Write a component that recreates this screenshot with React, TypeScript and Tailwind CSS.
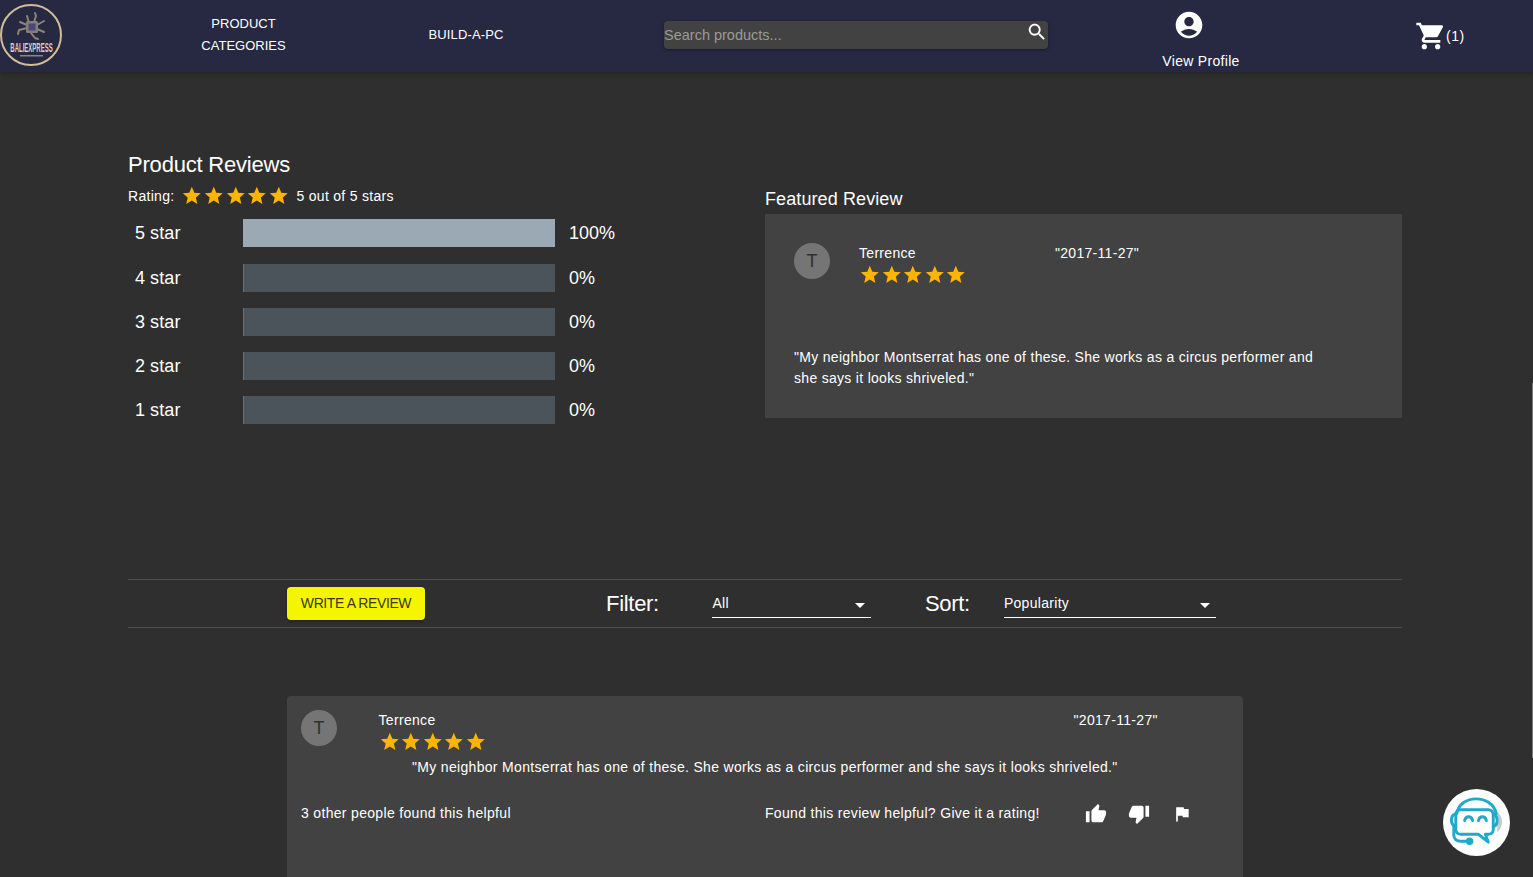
const STAR = "M12 17.27 18.18 21l-1.64-7.03L22 9.24l-7.19-.61L12 2 9.19 8.63 2 9.24l5.46 4.73L5.82 21z";

function Icon({ d, className }: { d: string; className: string }) {
  return (
    <svg viewBox="0 0 24 24" fill="currentColor" className={className}>
      <path d={d} />
    </svg>
  );
}

function Stars() {
  return (
    <div className="flex text-[#ffb400]">
      {[0, 1, 2, 3, 4].map((i) => (
        <Icon key={i} d={STAR} className="w-[21.6px] h-[21.6px]" />
      ))}
    </div>
  );
}

function Avatar() {
  return (
    <div className="w-9 h-9 rounded-full bg-[#757575] text-[#303030] flex items-center justify-center text-[18px] tracking-normal shrink-0">T</div>
  );
}

function Logo() {
  return (
    <svg viewBox="0 0 64 66" className="w-16 h-[66px] shrink-0">
      <circle cx="31" cy="32" r="30" fill="#272942" stroke="#d3bd96" strokeWidth="2" />
      <g stroke="#8d8474" strokeWidth="2" fill="none" strokeLinecap="round" strokeLinejoin="round">
        <path d="M29 20 L27 13 M34 19 L36 13 L35 10 M27 22 L20 19 M27 25 L19 27 L18 31 M37 22 L44 18 M37 26 L44 29 M31 30 L35 35 L38 36" />
      </g>
      <rect x="26" y="18" width="12" height="12" rx="1.5" fill="#857d78" />
      <rect x="28.5" y="20.5" width="7" height="7" fill="#4a467e" />
      <text x="0" y="0" transform="translate(31.5 49) scale(0.5 1)" textAnchor="middle" fontSize="12" fontWeight="700" fill="#d8d3c6" fontFamily="'Liberation Sans', sans-serif">BALIEXPRESS</text>
      <rect x="20" y="52" width="23" height="1.5" fill="#8b8880" />
    </svg>
  );
}

function Bot() {
  return (
    <svg viewBox="0 0 68 68" className="w-[67px] h-[67px]">
      <circle cx="34" cy="34" r="34" fill="#fff" />
      <path d="M55 23 C61 27 62 38 55 44 Z" fill="#c9c9c9" />
      <g fill="none" stroke="#1fa9cb" strokeWidth="3" strokeLinecap="round" strokeLinejoin="round">
        <path d="M14 25 C17 5 50 5 54 25" />
        <path d="M18 21 H46 C49 21 51 23 51 26 V41 C51 44 49 46 46 46 H43 L46 54 L36 46 H18 C15 46 13 44 13 41 V26 C13 23 15 21 18 21 Z" />
        <path d="M13 25 C7 27 7 36 13 38" />
        <path d="M51 25 C56 27 56 36 52 38" />
        <path d="M11 38 V47 C11 51 14 53 18 53 H26" />
        <path d="M22 32 C23 27 29 27 30 32" />
        <path d="M36 32 C37 27 43 27 44 32" />
      </g>
      <circle cx="27" cy="53" r="3.8" fill="#1fa9cb" />
    </svg>
  );
}

function RatingRow({ label, pct, filled, className }: { label: string; pct: string; filled?: boolean; className: string }) {
  return (
    <div className={`flex items-center h-7 ${className}`}>
      <div className="w-[53px] text-right text-[18px] tracking-[0.1px] shrink-0">{label}</div>
      <div className={`ml-[62px] w-[312px] h-7 shrink-0 ${filled ? "bg-[#9aa9b3]" : "bg-[#4b545a] border-l border-[#6a7278]"}`} />
      <div className="ml-[14.5px] text-[18px]">{pct}</div>
    </div>
  );
}

function Select({ value, className }: { value: string; className: string }) {
  return (
    <div className={`relative h-[29px] border-b border-white flex items-center text-[14px] tracking-[0.3px] shrink-0 ${className}`}>
      {value}
      <svg viewBox="0 0 24 24" fill="currentColor" className="absolute -right-[1px] top-1 w-6 h-6 text-white">
        <path d="M7 10l5 5 5-5z" />
      </svg>
    </div>
  );
}

export default function App() {
  return (
    <div className="relative h-[877px] overflow-hidden bg-[#2f2f2f] text-white font-['Liberation_Sans',Arial,sans-serif]">
      <header className="h-[72px] bg-[#272942] flex items-center shadow-[0_2px_4px_rgba(0,0,0,0.25)] text-[14px]">
        <Logo />
        <div className="ml-[136px] w-[87px] text-center text-[13px] leading-[22px] -mt-[2px] shrink-0">PRODUCT CATEGORIES</div>
        <div className="ml-[141px] w-[76px] text-center text-[13px] tracking-[0.15px] -mt-[2px] shrink-0 whitespace-nowrap">BUILD-A-PC</div>
        <div className="ml-[160px] w-[384px] h-7 rounded bg-[#424242] shadow-[0_1px_3px_rgba(0,0,0,0.4)] flex items-center justify-between -mt-[2px] shrink-0">
          <span className="text-[#9a9a9a] text-[14.5px] pt-[1px]">Search products...</span>
          <Icon d="M15.5 14h-.79l-.28-.27C15.41 12.59 16 11.11 16 9.5 16 5.91 13.09 3 9.5 3S3 5.91 3 9.5 5.91 16 9.5 16c1.61 0 3.09-.59 4.23-1.57l.27.28v.79l5 4.99L20.49 19l-4.99-5zm-6 0C7.01 14 5 11.99 5 9.5S7.01 5 9.5 5 14 7.01 14 9.5 11.99 14 9.5 14z" className="w-[22px] h-[22px] -mt-[6px]" />
        </div>
        <div className="ml-[114px] w-[78px] h-full shrink-0 flex flex-col">
          <Icon d="M12 2C6.48 2 2 6.48 2 12s4.48 10 10 10 10-4.48 10-10S17.52 2 12 2zm0 4c1.93 0 3.5 1.57 3.5 3.5S13.93 13 12 13s-3.5-1.57-3.5-3.5S10.07 6 12 6zm0 14c-2.03 0-4.43-.82-6.14-2.88C7.55 15.8 9.68 15 12 15s4.45.8 6.14 2.12C16.43 19.18 14.03 20 12 20z" className="w-8 h-8 mt-[9px] ml-[11px]" />
          <div className="mt-[10px] whitespace-nowrap text-center tracking-[0.3px]">View Profile</div>
        </div>
        <div className="ml-[175px] flex items-center shrink-0">
          <Icon d="M7 18c-1.1 0-1.99.9-1.99 2S5.9 22 7 22s2-.9 2-2-.9-2-2-2zM1 2v2h2l3.6 7.59-1.35 2.45c-.16.28-.25.61-.25.96 0 1.1.9 2 2 2h12v-2H7.42c-.14 0-.25-.11-.25-.25l.03-.12.9-1.63h7.45c.75 0 1.41-.41 1.75-1.03l3.58-6.49c.08-.14.12-.31.12-.48 0-.55-.45-1-1-1H5.21l-.94-2H1zm16 16c-1.1 0-1.99.9-1.99 2s.89 2 1.99 2 2-.9 2-2-.9-2-2-2z" className="w-8 h-8" />
          <span className="text-[14px] tracking-[0.5px] -ml-[1px]">(1)</span>
        </div>
      </header>

      <main className="pl-[128px] pr-[131px]">
        <div className="grid grid-cols-2 h-[507px]">
          <section className="pt-[80px]">
            <h2 className="text-[22px] leading-[26px] tracking-[-0.2px]">Product Reviews</h2>
            <div className="flex items-center h-[22px] mt-[7px] text-[14px] tracking-[0.3px]">
              <span>Rating:</span>
              <div className="ml-[7px]"><Stars /></div>
              <span className="ml-[7px]">5 out of 5 stars</span>
            </div>
            <div className="mt-[12px] -ml-[0.5px]">
              <RatingRow label="5 star" pct="100%" filled className="" />
              <RatingRow label="4 star" pct="0%" className="mt-[17px]" />
              <RatingRow label="3 star" pct="0%" className="mt-4" />
              <RatingRow label="2 star" pct="0%" className="mt-4" />
              <RatingRow label="1 star" pct="0%" className="mt-4" />
            </div>
          </section>
          <section className="pt-[117px]">
            <h3 className="text-[18px] leading-[21px] tracking-[0.1px]">Featured Review</h3>
            <div className="mt-[4px] h-[204px] bg-[#424242] pl-[29px] pt-[29px] text-[14px] tracking-[0.3px]">
              <div className="flex">
                <Avatar />
                <div className="ml-[29px] w-[196px]">
                  <div className="leading-[20px]">Terrence</div>
                  <div className="mt-[1px]"><Stars /></div>
                </div>
                <div className="leading-[20px]">"2017-11-27"</div>
              </div>
              <p className="mt-[61px] w-[535px] leading-[21px]">"My neighbor Montserrat has one of these. She works as a circus performer and she says it looks shriveled."</p>
            </div>
          </section>
        </div>

        <div className="h-[49px] border-y border-[#4c4c4c] flex items-center">
          <button className="ml-[159px] w-[138px] h-[33px] rounded bg-[#f5f500] text-[#3a3a00] text-[14px] shadow-[0_1px_3px_rgba(0,0,0,0.4)] tracking-[-0.4px]">WRITE A REVIEW</button>
          <span className="ml-[181px] text-[22px] tracking-[-0.3px]">Filter:</span>
          <Select value="All" className="ml-[53.5px] w-[159px]" />
          <span className="ml-[53.5px] text-[22px] tracking-[-0.3px]">Sort:</span>
          <Select value="Popularity" className="ml-[34px] w-[212px]" />
        </div>

        <article className="mt-[68px] ml-[159px] w-[956px] h-[260px] rounded bg-[#424242] pl-[14px] pt-[14px] text-[14px] tracking-[0.32px]">
          <div className="flex">
            <Avatar />
            <div className="ml-[41.5px] w-[695px] pt-[1px]">
              <div className="leading-[18px]">Terrence</div>
              <div className="mt-[2px]"><Stars /></div>
            </div>
            <div className="leading-[18px] pt-[1px]">"2017-11-27"</div>
          </div>
          <p className="mt-[4px] ml-[111px] leading-[21px]">"My neighbor Montserrat has one of these. She works as a circus performer and she says it looks shriveled."</p>
          <div className="flex items-center mt-[25px]">
            <span className="w-[464px]">3 other people found this helpful</span>
            <span className="w-[320px]">Found this review helpful? Give it a rating!</span>
            <Icon d="M1 21h4V9H1v12zm22-11c0-1.1-.9-2-2-2h-6.31l.95-4.57.03-.32c0-.41-.17-.79-.44-1.06L14.17 1 7.59 7.59C7.22 7.95 7 8.45 7 9v10c0 1.1.9 2 2 2h9c.83 0 1.54-.5 1.84-1.22l3.02-7.05c.09-.23.14-.47.14-.73v-2z" className="w-[22px] h-[22px]" />
            <Icon d="M15 3H6c-.83 0-1.54.5-1.84 1.22l-3.02 7.05c-.09.23-.14.47-.14.73v2c0 1.1.9 2 2 2h6.31l-.95 4.57-.03.32c0 .41.17.79.44 1.06L9.83 23l6.59-6.59c.36-.36.58-.86.58-1.41V5c0-1.1-.9-2-2-2zm4 0v12h4V3h-4z" className="w-[22px] h-[22px] ml-[21px]" />
            <Icon d="M14.4 6L14 4H5v17h2v-7h5.6l.4 2h7V6z" className="w-5 h-5 ml-[22px]" />
          </div>
        </article>
      </main>

      <div className="absolute right-[23px] bottom-[21px]"><Bot /></div>
      <div className="absolute right-0 top-[383px] h-[375px] w-px bg-[#7a7a7a]" />
    </div>
  );
}
